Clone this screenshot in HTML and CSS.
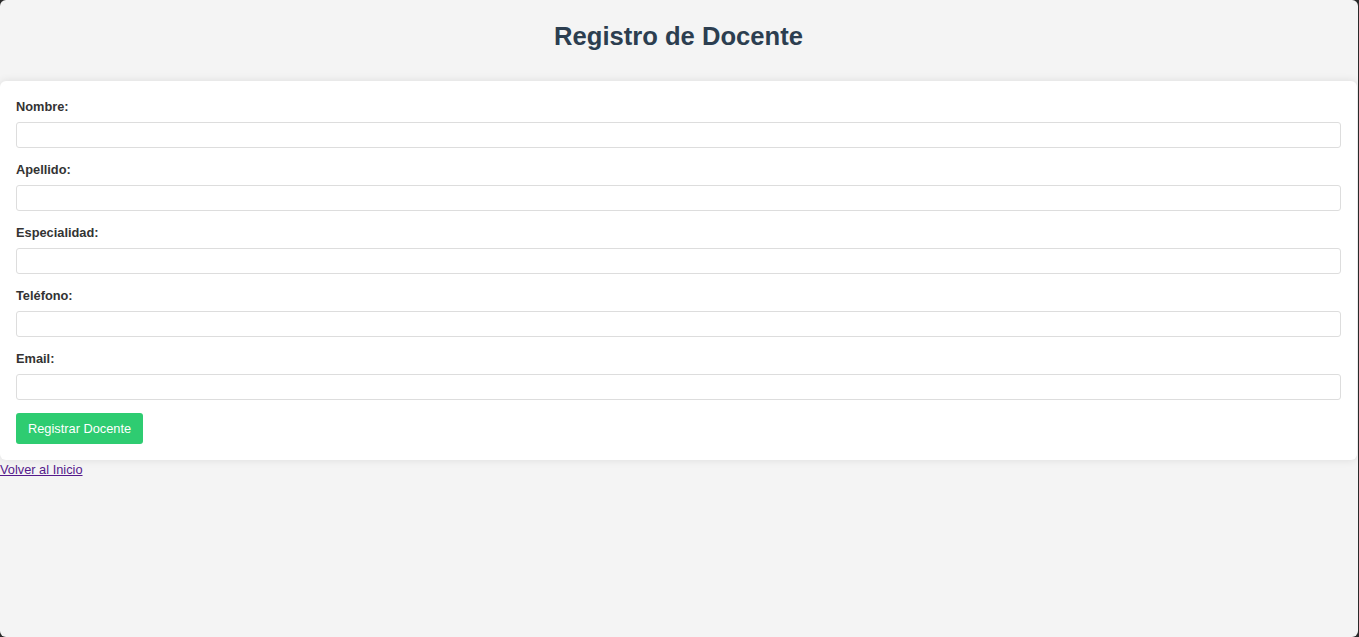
FILE: index.html
```html
<!DOCTYPE html>
<html lang="es">
<head>
<meta charset="utf-8">
<title>Registro de Docente</title>
<link rel="stylesheet" href="styles.css">
</head>
<body>
<div class="page">
  <header class="header">
    <h1 class="title">Registro de Docente</h1>
  </header>
  <form class="card">
    <div class="group">
      <label class="label" for="nombre">Nombre:</label>
      <input class="input" type="text" id="nombre">
    </div>
    <div class="group">
      <label class="label" for="apellido">Apellido:</label>
      <input class="input" type="text" id="apellido">
    </div>
    <div class="group">
      <label class="label" for="especialidad">Especialidad:</label>
      <input class="input" type="text" id="especialidad">
    </div>
    <div class="group">
      <label class="label" for="telefono">Teléfono:</label>
      <input class="input" type="text" id="telefono">
    </div>
    <div class="group">
      <label class="label" for="email">Email:</label>
      <input class="input" type="email" id="email">
    </div>
    <button class="button" type="button">Registrar Docente</button>
  </form>
  <a class="back" href="#">Volver al Inicio</a>
</div>
<div class="frame"></div>
</body>
</html>
```

FILE: styles.css
```css
html, body {
  margin: 0;
  padding: 0;
  background: #f4f4f4;
}
body {
  font-family: "Liberation Sans", Arial, sans-serif;
  font-size: 12.8px;
  color: #333;
}
.page {
  margin-right: 2px;
}
.header {
  padding: 22px 0 30px;
  text-align: center;
}
.title {
  margin: 0;
  font-size: 25.6px;
  font-weight: bold;
  color: #2c3e50;
}
.card {
  background: #fff;
  border-radius: 6px;
  box-shadow: 0 0 8px rgba(0, 0, 0, 0.1);
  padding: 18px 16px 16px;
  margin-bottom: 2px;
}
.group {
  margin-bottom: 14px;
}
.label {
  display: block;
  font-weight: bold;
  color: #333;
  line-height: 15px;
  margin-bottom: 8px;
}
.input {
  display: block;
  box-sizing: border-box;
  width: 100%;
  height: 26px;
  margin: 0;
  padding: 4px 6px;
  border: 1px solid #ddd;
  border-radius: 3px;
  font-family: inherit;
  font-size: 12.8px;
  background: #fff;
}
.button {
  display: block;
  margin-top: -1px;
  padding: 8px 12px;
  height: 31px;
  border: none;
  border-radius: 3px;
  background: #2ecc71;
  color: #fff;
  font-family: "Liberation Sans", Arial, sans-serif;
  font-size: 12.8px;
  line-height: 15px;
  cursor: pointer;
}
.back {
  color: #551a8b;
  text-decoration: underline;
  font-size: 12.8px;
}
.frame {
  position: fixed;
  top: 0;
  left: 0;
  right: 1px;
  bottom: 0;
  border-radius: 6px;
  box-shadow: 0 0 0 12px #2a2a2a;
  pointer-events: none;
}
```
